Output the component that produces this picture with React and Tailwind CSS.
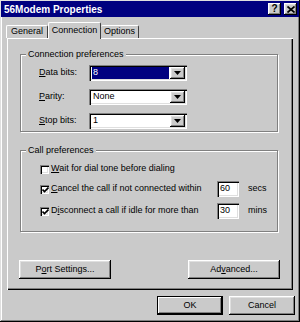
const raised = "shadow-[inset_-1px_-1px_0_#000,inset_1px_1px_0_#fff,inset_-2px_-2px_0_#808080,inset_2px_2px_0_#dfdfdf]";
const sunken = "shadow-[inset_1px_1px_0_#808080,inset_2px_2px_0_#000,inset_-1px_-1px_0_#fff,inset_-2px_-2px_0_#dfdfdf]";
const etched = "border border-[#808080] shadow-[1px_1px_0_#fff,inset_1px_1px_0_#fff]";

function Arrow() {
  return (
    <svg width="7" height="4" viewBox="0 0 7 4">
      <path d="M0 0h7L3.5 4z" fill="#000" />
    </svg>
  );
}

function Combo({ value, selected }) {
  return (
    <div className={`flex h-[16px] w-[98px] bg-white p-[2px] ${sunken}`}>
      <div className="flex flex-1 items-center pl-[1px] pr-[1px]">
        {selected ? (
          <span className="flex h-[12px] w-full items-center bg-[#000080] pl-[1px] text-white">{value}</span>
        ) : (
          <span className="pl-[1px]">{value}</span>
        )}
      </div>
      <div className={`flex h-[12px] w-[15px] items-center justify-center bg-[#cacaca] ${raised}`}>
        <Arrow />
      </div>
    </div>
  );
}

function Check({ checked }) {
  return (
    <span className={`flex h-[9px] w-[9px] shrink-0 items-center justify-center bg-white ${sunken}`}>
      {checked && (
        <svg width="7" height="6" viewBox="0 0 7 6" className="ml-[1px] mt-[1px]">
          <path d="M0.5 2.5L2.5 4.5L6.5 0.5" stroke="#000" strokeWidth="1.6" fill="none" />
        </svg>
      )}
    </span>
  );
}

function Btn({ children, w = "w-[92px]", def }) {
  return (
    <div
      className={`flex h-[19px] ${w} items-center justify-center bg-[#cacaca] ${
        def
          ? "border border-black shadow-[inset_-1px_-1px_0_#000,inset_1px_1px_0_#fff,inset_-2px_-2px_0_#808080]"
          : raised
      }`}
    >
      {children}
    </div>
  );
}

function Group({ title, h, children }) {
  return (
    <div className={`relative w-[258px] ${h} ${etched}`}>
      <span className="absolute -top-[7px] left-[5px] bg-[#cacaca] px-[2px] leading-[12px]">{title}</span>
      {children}
    </div>
  );
}

export default function App() {
  return (
    <div className="h-[322px] w-[300px] bg-[#cacaca] font-['Liberation_Sans',Arial,sans-serif] text-[9px] text-black">
      <div className="flex h-[322px] w-[300px] flex-col p-[1px] shadow-[inset_-1px_-1px_0_#000,inset_1px_1px_0_#dfdfdf,inset_-2px_-2px_0_#808080,inset_2px_2px_0_#fff]">
        {/* title bar */}
        <div className="flex h-[16px] items-center bg-[#000080] pl-[3px] pr-[2px]">
          <span className="flex-1 text-[10px] font-bold text-white">56Modem Properties</span>
          <div className={`flex h-[12px] w-[13px] items-center justify-center bg-[#cacaca] text-[10px] font-bold leading-none ${raised}`}>
            ?
          </div>
          <div className={`ml-[3px] flex h-[12px] w-[13px] items-center justify-center bg-[#cacaca] ${raised}`}>
            <svg width="8" height="7" viewBox="0 0 8 7">
              <path d="M0.5 0.5L7.5 6.5M7.5 0.5L0.5 6.5" stroke="#000" strokeWidth="1.7" />
            </svg>
          </div>
        </div>

        {/* tabs */}
        <div className="mt-[5px] flex h-[16px] items-end pl-[5px]">
          <div className="flex h-[13px] w-[42px] items-center justify-center rounded-t-[2px] border-l border-t border-r border-white border-r-[#404040]">
            General
          </div>
          <div className="relative z-10 -mb-[1px] flex h-[17px] w-[53px] items-start justify-center rounded-t-[2px] border-l border-t border-r border-white border-r-[#404040] bg-[#cacaca] pt-[1px]">
            Connection
          </div>
          <div className="flex h-[13px] w-[38px] items-center justify-center rounded-t-[2px] border-t border-r border-white border-r-[#404040]">
            Options
          </div>
        </div>

        {/* panel */}
        <div className="ml-[6px] flex h-[252px] w-[286px] flex-col pl-[13px] pt-[16px] shadow-[inset_1px_1px_0_#fff,inset_-1px_-1px_0_#000,inset_-2px_-2px_0_#808080]">
          <Group title="Connection preferences" h="h-[78px]">
            <div className="flex flex-col gap-[8px] pl-[18px] pt-[10px]">
              <div className="flex h-[16px] items-center">
                <span className="w-[50px]"><span className="underline">D</span>ata bits:</span>
                <Combo value="8" selected />
              </div>
              <div className="flex h-[16px] items-center">
                <span className="w-[50px]"><span className="underline">P</span>arity:</span>
                <Combo value="None" />
              </div>
              <div className="flex h-[16px] items-center">
                <span className="w-[50px]"><span className="underline">S</span>top bits:</span>
                <Combo value="1" />
              </div>
            </div>
          </Group>

          <div className="mt-[18px]">
            <Group title="Call preferences" h="h-[82px]">
              <div className="flex flex-col pl-[19px] pt-[10px]">
                <div className="flex h-[16px] items-center">
                  <Check />
                  <span className="ml-[2px]"><span className="underline">W</span>ait for dial tone before dialing</span>
                </div>
                <div className="mt-[4px] flex h-[16px] items-center">
                  <Check checked />
                  <span className="ml-[2px] w-[166px]"><span className="underline">C</span>ancel the call if not connected within</span>
                  <div className={`flex h-[16px] w-[22px] items-center bg-white pl-[3px] ${sunken}`}>60</div>
                  <span className="ml-[9px]">secs</span>
                </div>
                <div className="mt-[6px] flex h-[16px] items-center">
                  <Check checked />
                  <span className="ml-[2px] w-[166px]">D<span className="underline">i</span>sconnect a call if idle for more than</span>
                  <div className={`flex h-[16px] w-[22px] items-center bg-white pl-[3px] ${sunken}`}>30</div>
                  <span className="ml-[9px]">mins</span>
                </div>
              </div>
            </Group>
          </div>

          <div className="-ml-[1px] mt-[28px] flex w-[261px] justify-between">
            <Btn>
              <span>P<span className="underline">o</span>rt Settings...</span>
            </Btn>
            <Btn>
              <span>Ad<span className="underline">v</span>anced...</span>
            </Btn>
          </div>
        </div>

        {/* dialog buttons */}
        <div className="mt-[6px] flex justify-end gap-[6px] pr-[4px]">
          <Btn w="w-[66px]" def>OK</Btn>
          <Btn w="w-[66px]">Cancel</Btn>
        </div>
      </div>
    </div>
  );
}
